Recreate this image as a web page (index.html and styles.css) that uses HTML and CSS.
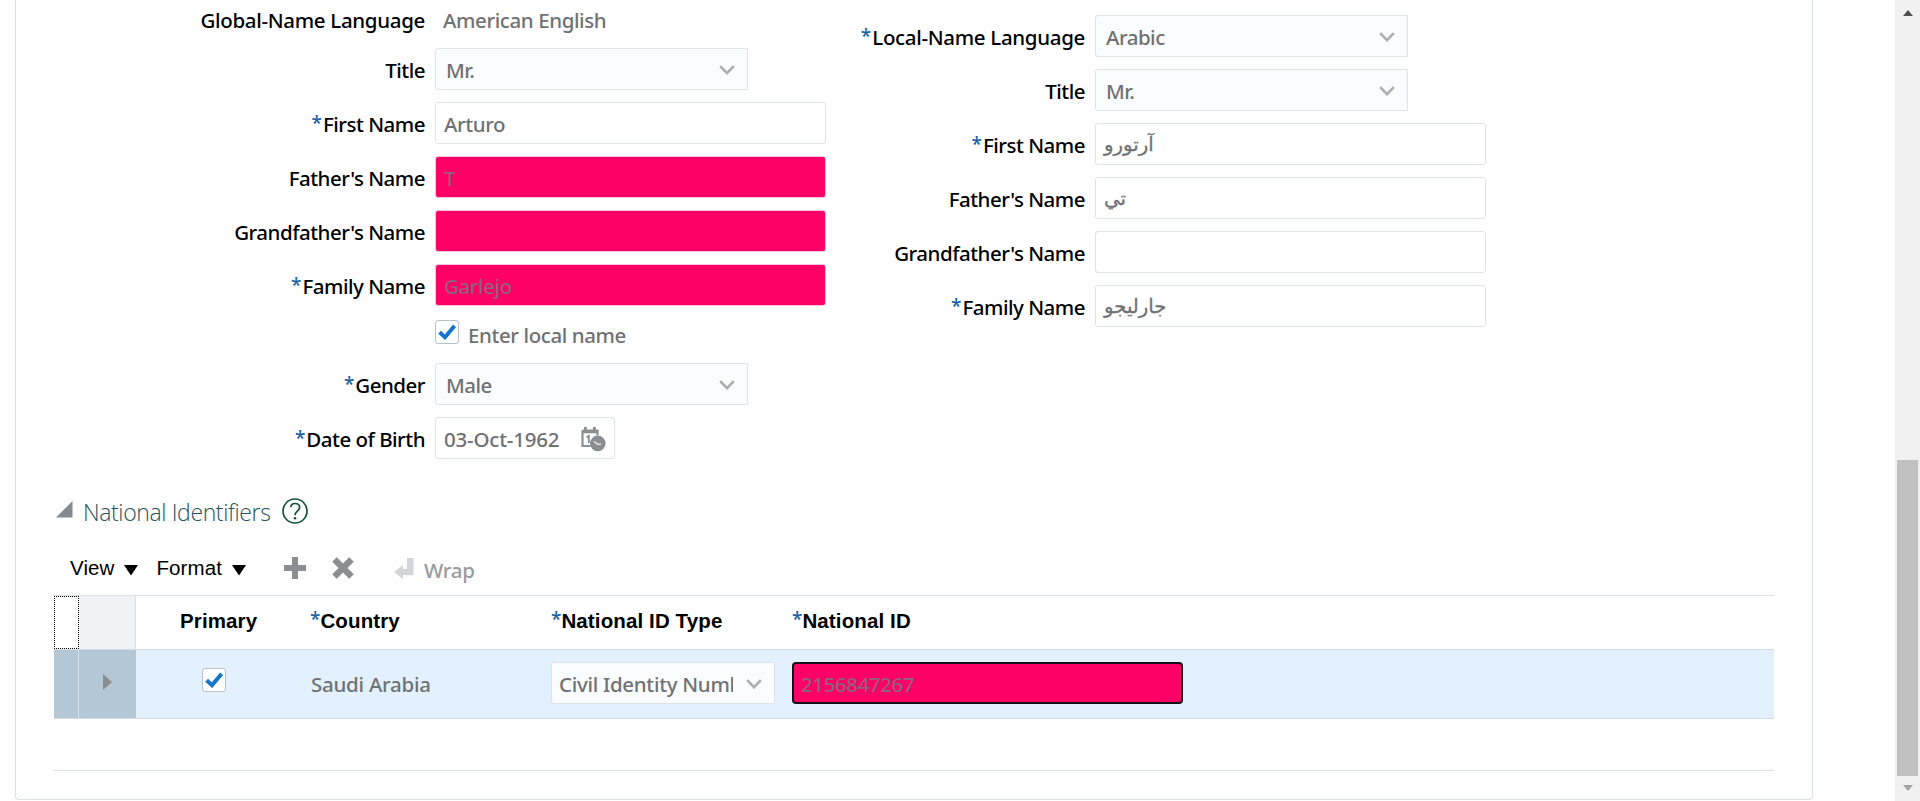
FILE: index.html
```
<!DOCTYPE html>
<html lang="en">
<head>
<meta charset="utf-8">
<title>National Identifiers</title>
<link rel="stylesheet" href="styles.css">
</head>
<body>
<svg width="0" height="0" class="defs">
  <symbol id="chevron" viewBox="0 0 16 10"><path d="M1.2 1.2 8 8.2 14.8 1.2" fill="none" stroke="#abadaf" stroke-width="2.6"/></symbol>
  <symbol id="check" viewBox="0 0 18 16"><path d="M1.6 8.2 7 13.2 16.6 1.8" fill="none" stroke="#1377cd" stroke-width="4"/></symbol>
</svg>
<main class="panel">
  <section class="forms">
    <div class="form form-global">
      <div class="row row-text"><span class="label wide">Global-Name Language</span><span class="static">American English</span></div>
      <div class="row"><span class="label">Title</span><div class="field select"><span>Mr.</span><svg class="chev"><use href="#chevron"/></svg></div></div>
      <div class="row"><span class="label"><i>*</i>First Name</span><div class="field input">Arturo</div></div>
      <div class="row"><span class="label">Father's Name</span><div class="field input marked">T</div></div>
      <div class="row"><span class="label">Grandfather's Name</span><div class="field input marked"></div></div>
      <div class="row"><span class="label"><i>*</i>Family Name</span><div class="field input marked">Garlejo</div></div>
      <div class="row row-check"><span class="label"></span><div class="option"><span class="checkbox"><svg><use href="#check"/></svg></span><span class="option-text">Enter local name</span></div></div>
      <div class="row"><span class="label"><i>*</i>Gender</span><div class="field select"><span>Male</span><svg class="chev"><use href="#chevron"/></svg></div></div>
      <div class="row"><span class="label"><i>*</i>Date of Birth</span><div class="field date"><span>03-Oct-1962</span>
        <svg class="calendar" viewBox="0 0 26 26"><path d="M2.5 4.5h15v5M2.5 4.5v15.5h8" fill="none" stroke="#8b8e91" stroke-width="2.2"/><path d="M2 4.5h16v2.8H2zM4 1h2.8v5H4zM13 1h2.8v5H13z" fill="#8b8e91"/><path d="M6.6 11.4 8.8 10V17" fill="none" stroke="#8b8e91" stroke-width="1.9"/><circle cx="17.8" cy="17.4" r="7.8" fill="#8b8e91"/><path d="m14 15.6 3.8 2.8 3.4-.2" fill="none" stroke="#f4f4f4" stroke-width="1.3"/></svg></div></div>
    </div>
    <div class="form form-local">
      <div class="row"><span class="label wide"><i>*</i>Local-Name Language</span><div class="field select"><span>Arabic</span><svg class="chev"><use href="#chevron"/></svg></div></div>
      <div class="row"><span class="label">Title</span><div class="field select"><span>Mr.</span><svg class="chev"><use href="#chevron"/></svg></div></div>
      <div class="row"><span class="label"><i>*</i>First Name</span><div class="field input arabic"><span lang="ar">آرتورو</span></div></div>
      <div class="row"><span class="label">Father's Name</span><div class="field input arabic"><span lang="ar">تي</span></div></div>
      <div class="row"><span class="label">Grandfather's Name</span><div class="field input"></div></div>
      <div class="row"><span class="label"><i>*</i>Family Name</span><div class="field input arabic"><span lang="ar">جارليجو</span></div></div>
    </div>
  </section>
  <section class="identifiers">
    <h2 class="heading">
      <svg class="disclose" viewBox="0 0 17 17"><path d="M16.5 0v16.5H0z" fill="#878a8d"/></svg>
      <span>National Identifiers</span>
      <svg class="help" viewBox="0 0 26 26"><g fill="none" stroke="#16513f" stroke-width="1.7"><circle cx="13" cy="13" r="12"/><path d="M8.7 9.2C9 6.8 10.8 5.5 13.1 5.5c2.6 0 4.5 1.5 4.5 3.8 0 3.9-4.6 3.8-4.6 8"/></g><circle cx="13" cy="20.3" r="1.3" fill="#16513f"/></svg>
    </h2>
    <div class="toolbar">
      <span class="menu">View</span><svg class="caret" viewBox="0 0 14 11"><path d="M0 0h14L7 10.5z"/></svg>
      <span class="menu format">Format</span><svg class="caret" viewBox="0 0 14 11"><path d="M0 0h14L7 10.5z"/></svg>
      <svg class="tool add" viewBox="0 0 22 22"><path d="M11 0v22M0 11h22" stroke="#8b8e91" stroke-width="6"/></svg>
      <svg class="tool remove" viewBox="0 0 22 22"><path d="m2.5 2.5 17 17m0-17-17 17" stroke="#8b8e91" stroke-width="6.4"/></svg>
      <svg class="tool wrap" viewBox="0 0 20 22"><path d="M13 1h6.5v17H9v4L0 15l9-7v4h4z" fill="#d3d5d6"/></svg>
      <span class="wrap-text">Wrap</span>
    </div>
    <div class="table">
      <div class="tr head">
        <div class="corner"></div><div class="expand"></div>
        <div class="primary"><b>Primary</b></div>
        <div class="country"><i>*</i><b>Country</b></div>
        <div class="type"><i>*</i><b>National ID Type</b></div>
        <div class="id"><i>*</i><b>National ID</b></div>
      </div>
      <div class="tr data">
        <div class="corner"></div>
        <div class="expand"><svg viewBox="0 0 9 16"><path d="M0 0v16l9-8z" fill="#8b8e91"/></svg></div>
        <div class="primary"><span class="checkbox"><svg><use href="#check"/></svg></span></div>
        <div class="country"><span class="value">Saudi Arabia</span></div>
        <div class="type"><div class="field select"><span class="clip">Civil Identity Number</span><svg class="chev"><use href="#chevron"/></svg></div></div>
        <div class="id"><div class="field input marked focused">2156847267</div></div>
      </div>
    </div>
  </section>
</main>
<aside class="scrollbar"><span class="up"></span><span class="thumb"></span><span class="down"></span></aside>
</body>
</html>
```
FILE: styles.css
```
* { box-sizing: border-box; }
html, body { height: 801px; overflow: hidden; }
body {
  margin: 0;
  display: flex;
  background: #fefefe;
  font: 500 20.5px/28px "Noto Sans", sans-serif;
  letter-spacing: -0.5px;
  color: #000;
}
.defs { position: absolute; }
i { font-style: normal; font-size: 19px; line-height: 20px; vertical-align: 2px; color: #1961a3; margin-right: 1px; letter-spacing: 0; }

.panel {
  width: 1798px;
  height: 800px;
  margin-left: 15px;
  padding: 0 38px;
  border: 1px solid #dbe0e3;
  border-top: 0;
  border-radius: 0 0 4px 4px;
}

/* name forms */
.forms { display: flex; height: 487px; }
.form { display: flex; flex-direction: column; gap: 12px; }
.form-global { width: 800px; }
.form-local { padding-top: 15px; }
.row { display: flex; height: 42px; align-items: center; }
.row-text { height: 36px; padding-top: 2px; }
.row-check { height: 33px; }
.label { width: 371px; margin-right: 10px; padding-top: 1px; text-align: right; white-space: nowrap; }
.label.wide { letter-spacing: -0.32px; }
.form-local .label { width: 231px; margin-right: 10px; }
.static { margin-left: 8px; padding-top: 1px; color: #6f7173; letter-spacing: -0.4px; }

.field {
  display: flex;
  align-items: center;
  height: 42px;
  border: 1px solid #dfe4e8;
  border-radius: 3px;
  background: #fff;
  color: #6f7173;
  white-space: nowrap;
}
.input { width: 391px; padding: 1px 8px 0; letter-spacing: -0.4px; }
.select { width: 313px; padding: 1px 12px 0 10px; justify-content: space-between; border-radius: 3px 0 0 3px; background: #fbfcfe; }
.marked { background: #ff0066; border-color: #f6c5dc; color: #945f7b; }
.date { width: 180px; padding: 1px 8px 0; justify-content: space-between; letter-spacing: -0.2px; }
.chev { width: 16px; height: 10px; flex: none; }
.calendar { width: 26px; height: 26px; }
.arabic { font-family: "DejaVu Sans", sans-serif; font-size: 19.7px; letter-spacing: 0; -webkit-text-stroke: 0.3px #6f7173; }

.checkbox {
  display: flex;
  align-items: center;
  justify-content: center;
  width: 24px;
  height: 24px;
  border: 1.5px solid #b7c2cc;
  border-radius: 3px;
  background: #fff;
}
.checkbox svg { width: 18px; height: 16px; }
.option { display: flex; gap: 9px; padding-bottom: 1px; color: #6f7173; letter-spacing: -0.4px; }
.option-text { padding-top: 1px; }

/* national identifiers */
.heading {
  display: flex;
  height: 50px;
  margin: 0;
  align-items: center;
  font: 300 23px/30px "Open Sans", sans-serif;
  letter-spacing: -0.38px;
  color: #27545c;
}
.disclose { width: 17px; height: 17px; margin: 0 10px 6px 2px; }
.help { width: 26px; height: 26px; margin: 0 0 2px 11px; }
.toolbar {
  display: flex;
  height: 58px;
  align-items: center;
  padding: 4px 0 0 16px;
  font-family: "Liberation Sans", sans-serif;
  letter-spacing: 0.1px;
}
.caret { width: 14px; height: 11px; margin: 4px 0 0 10px; }
.format { margin-left: 18px; }
.tool { width: 22px; height: 22px; }
.add { margin-left: 38px; }
.remove { margin-left: 26px; }
.wrap { width: 20px; margin-left: 40px; }
.wrap-text { margin: 4px 0 0 10px; font-family: "Noto Sans", sans-serif; color: #999b9d; letter-spacing: -0.3px; }

.table { width: 1720px; height: 176px; border-bottom: 1px solid #d9dfe3; border-top: 1px solid #d9dfe3; }
.tr {
  display: grid;
  grid-template-columns: 25px 57px 174px 241px 241px 1fr;
  border-bottom: 1px solid #d6dde2;
}
.tr > div { display: flex; align-items: center; }
.head { height: 54px; font-family: "Liberation Sans", sans-serif; letter-spacing: 0.12px; }
.head > div { padding-bottom: 3px; }
.head i { font-family: "Noto Sans", sans-serif; margin: 0 0 4px; }
.head .corner { border: 1px dotted #000; }
.head .expand { background: #f1f2f6; border-right: 1px solid #d9dfe3; }
.head .primary { padding-left: 44px; }
.data { height: 69px; background: #e3f1fe; }
.data .corner { background: #b3c7d7; border-right: 1px solid #d5e2ec; }
.data .expand { background: #b3c7d7; justify-content: center; }
.data .expand svg { width: 9px; height: 16px; margin: 0 0 5px -1px; }
.data .primary { padding: 0 0 8px 66px; }
.data .type, .data .id { padding-bottom: 2px; }
.data .value { padding: 0 0 1px 1px; color: #6f7173; letter-spacing: -0.25px; }
.data .select { width: 224px; padding: 1px 12px 0 7px; border-color: #dbe4ed; letter-spacing: -0.3px; }
.clip { width: 174px; overflow: hidden; }
.data .focused { border: 2px solid #151018; border-radius: 4px; padding: 2px 7px 0; }

/* window scrollbar */
.scrollbar {
  display: flex;
  flex-direction: column;
  align-items: center;
  width: 25px;
  margin-left: auto;
  background: #f0f0f0;
}
.up, .down { border: 5.5px solid transparent; border-top: 0; border-bottom: 6px solid #505050; margin-top: 10px; }
.thumb { width: 21px; height: 316px; margin-top: 444px; background: #c0c0c0; }
.down { border-bottom: 0; border-top: 6px solid #a3a3a3; margin-top: 9px; }
```
